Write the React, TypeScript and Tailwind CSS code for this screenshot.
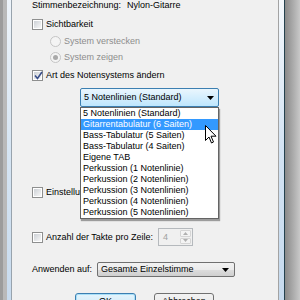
import React from "react";

const staffOptions = [
  "5 Notenlinien (Standard)",
  "Gitarrentabulatur (6 Saiten)",
  "Bass-Tabulatur (5 Saiten)",
  "Bass-Tabulatur (4 Saiten)",
  "Eigene TAB",
  "Perkussion (1 Notenlinie)",
  "Perkussion (2 Notenlinien)",
  "Perkussion (3 Notenlinien)",
  "Perkussion (4 Notenlinien)",
  "Perkussion (5 Notenlinien)",
];

function CheckBox({ checked }: { checked?: boolean }) {
  return (
    <span className="relative flex h-[11px] w-[11px] shrink-0 items-center justify-center border border-[#8e8f8f] bg-white">
      <span className="h-[7px] w-[7px] bg-linear-to-br from-[#cdd1d6] to-[#f7f7f7]" />
      {checked && (
        <svg
          className="absolute left-[1px] top-[0px]"
          width="9"
          height="9"
          viewBox="0 0 9 9"
        >
          <path
            d="M1 4.5 L3.5 7.5 L8 1"
            fill="none"
            stroke="#3a4f8a"
            strokeWidth="1.6"
          />
        </svg>
      )}
    </span>
  );
}

function Radio({ selected }: { selected?: boolean }) {
  return (
    <span className="flex h-[11px] w-[11px] shrink-0 items-center justify-center rounded-full border border-[#c5c5c5] bg-[#f4f4f4]">
      {selected && (
        <span className="h-[5px] w-[5px] rounded-full bg-[#a9a9a9]" />
      )}
    </span>
  );
}

function Arrow() {
  return (
    <svg width="7" height="4" viewBox="0 0 7 4">
      <path d="M0 0 H7 L3.5 4 Z" fill="#000" />
    </svg>
  );
}

export default function App() {
  return (
    <div className="flex h-[300px] w-[300px] overflow-hidden whitespace-nowrap bg-[#f0f0f0] font-['Liberation_Sans',Arial,sans-serif] text-[9px] leading-none text-black">
      {/* left frame */}
      <div className="w-[3px] shrink-0 bg-[#9c9c9c]" />
      <div className="w-[4px] shrink-0 bg-[#b9b9b9]" />
      <div className="w-[4px] shrink-0 bg-linear-to-b from-[#eef4fa] via-[#d6e5f3] to-[#c8dbee]" />
      <div className="w-[1px] shrink-0 bg-[#98a3ad]" />

      <main className="flex w-[266px] shrink-0 self-start flex-col pl-[20px]">
        <div className="flex h-[11px] items-center">
          <span className="w-[95px]">Stimmenbezeichnung:</span>
          <span>Nylon-Gitarre</span>
        </div>

        <div className="mt-[7px] flex h-[12px] items-center gap-[3px]">
          <CheckBox />
          <span>Sichtbarkeit</span>
        </div>

        <div className="mt-[5px] flex h-[12px] items-center gap-[3px] pl-[18px] text-[#8d8d8d]">
          <Radio />
          <span>System verstecken</span>
        </div>
        <div className="mt-[4px] flex h-[12px] items-center gap-[3px] pl-[18px] text-[#8d8d8d]">
          <Radio selected />
          <span>System zeigen</span>
        </div>

        <div className="mt-[6px] flex h-[12px] items-center gap-[3px]">
          <CheckBox checked />
          <span>Art des Notensystems ändern</span>
        </div>

        {/* open combobox */}
        <div className="relative ml-[48px] mt-[7px] h-[19px] w-[139px]">
          <div className="flex h-full items-center justify-between rounded-[2px] border border-[#3c7fb1] bg-linear-to-b from-[#eaf6fd] to-[#bee6fd] pl-[3px] pr-[4px]">
            <span>5 Notenlinien (Standard)</span>
            <Arrow />
          </div>
          <ul className="absolute left-0 top-[19px] z-10 w-[139px] border border-[#646464] bg-white shadow-[1px_2px_1px_rgba(0,0,0,0.35)]">
            {staffOptions.map((option, i) => (
              <li
                key={option}
                className={
                  i === 1
                    ? "flex h-[11px] items-center bg-[#3399ff] pl-[2px] text-white"
                    : "flex h-[11px] items-center pl-[2px]"
                }
              >
                {option}
              </li>
            ))}
          </ul>
          <svg
            className="absolute left-[125px] top-[37px] z-20"
            width="12"
            height="19"
            viewBox="0 0 12 19"
          >
            <path
              d="M0.5 0.5 V15.5 L4 12 L6.5 18 L8.5 17 L6 11.2 H11 Z"
              fill="#fff"
              stroke="#000"
              strokeWidth="1"
              strokeLinejoin="round"
            />
          </svg>
        </div>

        <div className="mt-[79px] flex h-[12px] items-center gap-[3px]">
          <CheckBox />
          <span>Einstellungen für Notenzeilen</span>
        </div>

        <div className="mt-[30px] flex h-[18px] items-center">
          <CheckBox />
          <span className="ml-[3px] w-[112px]">Anzahl der Takte pro Zeile:</span>
          <div className="flex h-[18px] w-[35px] items-stretch border border-[#b5b9bd] bg-[#f0f0f0]">
            <span className="flex flex-1 items-center pl-[4px] text-[#a0a0a0]">
              4
            </span>
            <div className="my-[1px] mr-[1px] flex w-[11px] flex-col gap-[1px]">
              <span className="flex flex-1 items-center justify-center rounded-[1px] border border-[#d5d5d5] bg-[#f4f4f4]">
                <svg width="5" height="3" viewBox="0 0 5 3">
                  <path d="M0 3 H5 L2.5 0 Z" fill="#b0b0b0" />
                </svg>
              </span>
              <span className="flex flex-1 items-center justify-center rounded-[1px] border border-[#d5d5d5] bg-[#f4f4f4]">
                <svg width="5" height="3" viewBox="0 0 5 3">
                  <path d="M0 0 H5 L2.5 3 Z" fill="#b0b0b0" />
                </svg>
              </span>
            </div>
          </div>
        </div>

        <div className="mt-[16px] flex h-[15px] items-center">
          <span className="w-[65px]">Anwenden auf:</span>
          <div className="flex h-[15px] w-[138px] items-center justify-between rounded-[2px] border border-[#707070] bg-[linear-gradient(to_bottom,#f2f2f2_0%,#ebebeb_50%,#dddddd_51%,#cfcfcf_100%)] pl-[3px] pr-[5px]">
            <span>Gesamte Einzelstimme</span>
            <Arrow />
          </div>
        </div>

        <div className="ml-[43px] mt-[16px] flex gap-[18px]">
          <button className="flex h-[20px] w-[61px] items-start justify-center rounded-[3px] border border-[#3c7fb1] bg-linear-to-b from-[#e5f4fc] to-[#c4e5f6] pt-[3px] shadow-[inset_0_0_0_1px_#a9dff8]">
            OK
          </button>
          <button className="flex h-[20px] w-[60px] items-start justify-center rounded-[3px] border border-[#707070] bg-[linear-gradient(to_bottom,#f2f2f2_0%,#ebebeb_50%,#dddddd_51%,#cfcfcf_100%)] pt-[3px]">
            Abbrechen
          </button>
        </div>
      </main>

      {/* right frame and shadow */}
      <div className="w-[1px] shrink-0 bg-[#a3a3a3]" />
      <div className="w-[5px] shrink-0 bg-linear-to-b from-[#f4f8fc] via-[#d3e3f3] to-[#c6daee]" />
      <div className="w-[1px] shrink-0 bg-[#24414e]" />
      <div className="w-[15px] shrink-0 bg-linear-to-r from-[#8a8a8a] to-[#c8c8c8]" />
    </div>
  );
}
